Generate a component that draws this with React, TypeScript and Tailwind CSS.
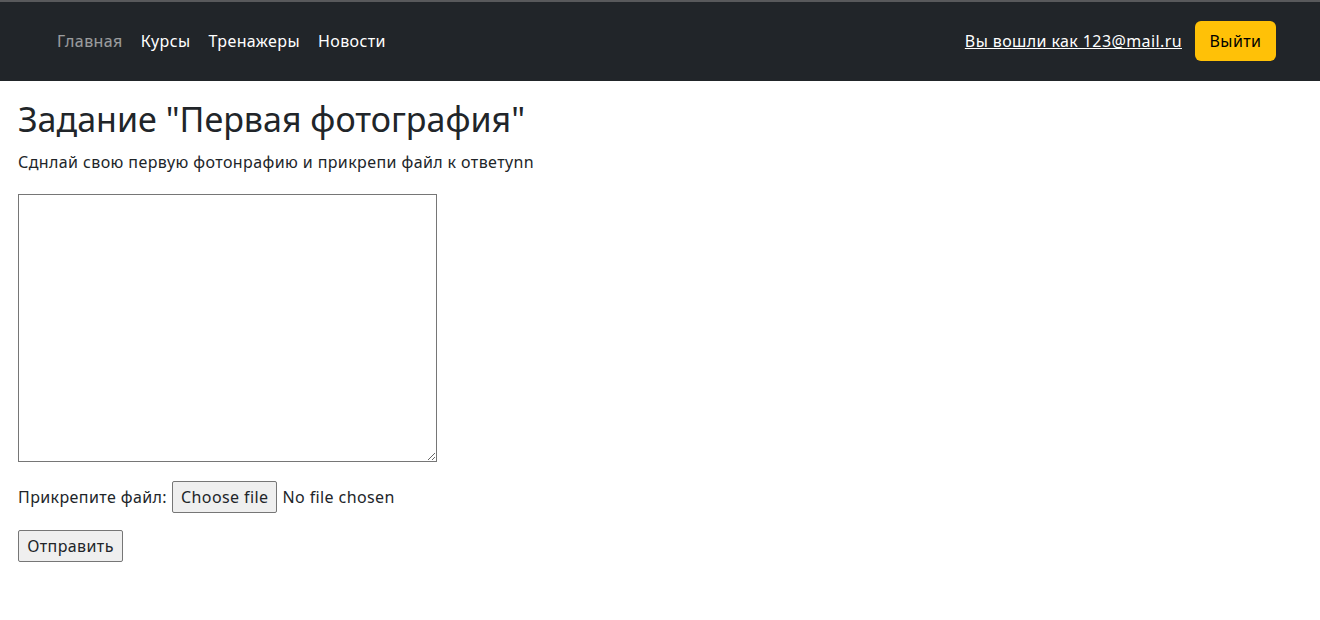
export default function App() {
    return (
        <div className="min-h-screen bg-white font-['Noto_Sans',sans-serif] tracking-[0.4px] text-[#212529]">
            {/* Navbar */}
            <nav className="flex h-[81px] items-center justify-between border-t-2 border-[#58595b] bg-[#212529] pb-[1px] pl-[57px] pr-[44px]">
                <div className="flex items-center gap-[18px] text-base leading-6">
                    <a href="#" className="text-white/55">Главная</a>
                    <a href="#" className="text-white">Курсы</a>
                    <a href="#" className="text-white">Тренажеры</a>
                    <a href="#" className="text-white">Новости</a>
                </div>
                <div className="flex items-center gap-[13px]">
                    <a href="#" className="text-base leading-6 text-white underline">Вы вошли как 123@mail.ru</a>
                    <button className="h-[40px] w-[81px] rounded-[6px] bg-[#ffc107] text-base leading-6 text-black">Выйти</button>
                </div>
            </nav>

            <main className="px-[18px]">
                <h1 className="mt-[14px] mb-[7px] text-[34px] leading-[48px] font-normal tracking-normal">Задание "Первая фотография"</h1>
                <p className="mb-4 text-base leading-6">Сднлай свою первую фотонрафию и прикрепи файл к ответуnn</p>

                <form className="flex flex-col items-start">
                    <textarea className="mt-1 block h-[268px] w-[419px] border border-[#767676] bg-white"></textarea>

                    <div className="mt-[19px] flex items-center text-base leading-6">
                        <span>Прикрепите файл:</span>
                        <span className="ml-[5px] flex h-[32px] items-center rounded-[2px] border border-[#767676] bg-[#efefef] px-[8px]">Choose file</span>
                        <span className="ml-[5px]">No file chosen</span>
                    </div>

                    <button type="submit" className="mt-[17px] flex h-[32px] w-[105px] items-center justify-center rounded-[2px] border border-[#767676] bg-[#efefef] text-base leading-6">
                        Отправить
                    </button>
                </form>
            </main>
        </div>
    );
}
